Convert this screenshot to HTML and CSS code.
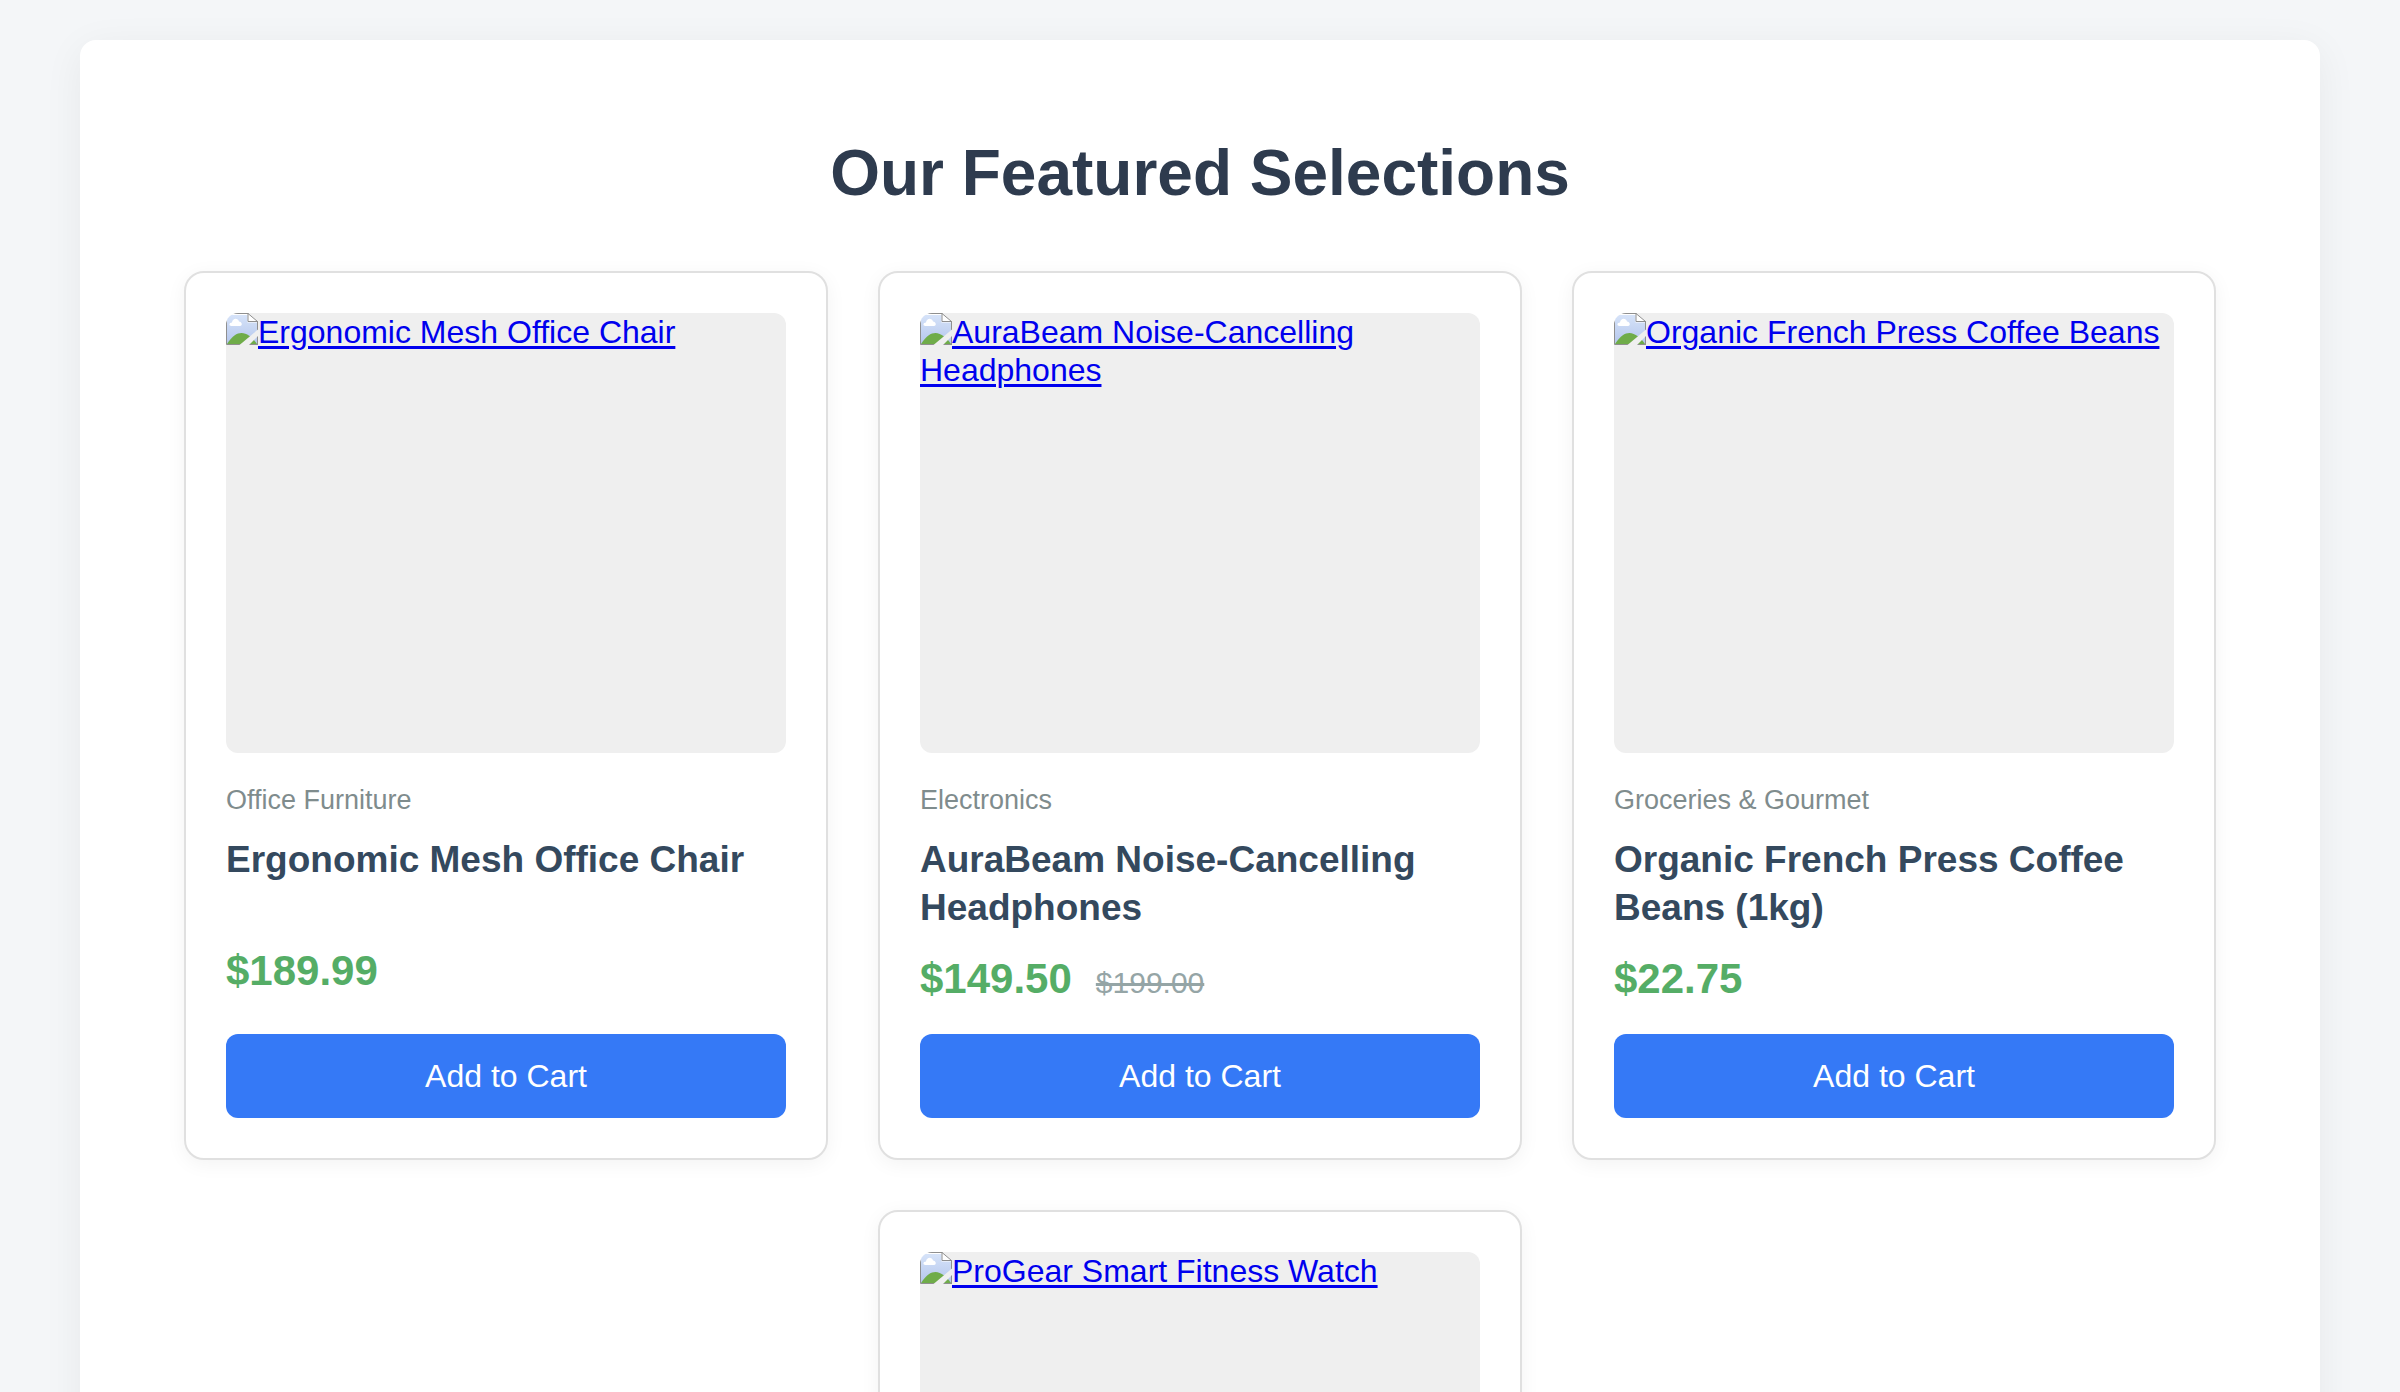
FILE: index.html
```html
<!DOCTYPE html>
<html lang="en">
<head>
<meta charset="utf-8">
<meta name="viewport" content="width=device-width, initial-scale=1">
<title>Our Featured Selections</title>
<link rel="stylesheet" href="styles.css">
</head>
<body>
<svg class="sprite" aria-hidden="true">
  <defs>
    <linearGradient id="sky" x1="0" y1="0" x2="0" y2="1">
      <stop offset="0" stop-color="#d6e3f9"/>
      <stop offset="1" stop-color="#b4c6ec"/>
    </linearGradient>
    <symbol id="picture" viewBox="0 0 32 32">
      <path d="M0.5 0.5H22.5L31.5 9V31.5H0.5Z" fill="#fff"/>
      <path d="M1 2H21.500V9.500H31V31H1Z" fill="url(#sky)"/>
      <path d="M5.500 13C2.500 13 3 9.500 6 9.500C6.500 5 12 4.500 13 8.500C16 8.500 17 13 14 13Z" fill="#fff"/>
      <path d="M1 31C6 23 11 20 15.500 20C21 20 27 25 31 31Z" fill="#6fac49"/>
      <path d="M0.500 0V31.500H32M0 0.500H22.500M31.500 8V32" fill="none" stroke="#8f8f8f"/>
      <path d="M22 0.500V8.500H31.500Z" fill="#fff" stroke="#8f8f8f"/>
      <path d="M13.500 32L32 16.500V23L23 32Z" fill="#efefef"/>
    </symbol>
  </defs>
</svg>
<main class="shop">
  <h1 class="shop-title">Our Featured Selections</h1>
  <div class="products">
    <article class="card">
      <a class="photo" href="#chair"><svg class="photo-icon" aria-hidden="true"><use href="#picture"/></svg>Ergonomic Mesh Office Chair</a>
      <p class="category">Office Furniture</p>
      <h2 class="name">Ergonomic Mesh Office Chair</h2>
      <p class="prices"><span class="price">$189.99</span></p>
      <button class="add" type="button">Add to Cart</button>
    </article>
    <article class="card">
      <a class="photo" href="#headphones"><svg class="photo-icon" aria-hidden="true"><use href="#picture"/></svg>AuraBeam Noise-Cancelling Headphones</a>
      <p class="category">Electronics</p>
      <h2 class="name">AuraBeam Noise-Cancelling Headphones</h2>
      <p class="prices"><span class="price">$149.50</span><s class="old-price">$199.00</s></p>
      <button class="add" type="button">Add to Cart</button>
    </article>
    <article class="card">
      <a class="photo" href="#coffee"><svg class="photo-icon" aria-hidden="true"><use href="#picture"/></svg>Organic French Press Coffee Beans</a>
      <p class="category">Groceries &amp; Gourmet</p>
      <h2 class="name">Organic French Press Coffee Beans (1kg)</h2>
      <p class="prices"><span class="price">$22.75</span></p>
      <button class="add" type="button">Add to Cart</button>
    </article>
    <article class="card">
      <a class="photo" href="#watch"><svg class="photo-icon" aria-hidden="true"><use href="#picture"/></svg>ProGear Smart Fitness Watch</a>
    </article>
  </div>
</main>
</body>
</html>
```
FILE: styles.css
```css
* {
  box-sizing: border-box;
}

body {
  margin: 0;
  padding: 40px 80px;
  background: #f4f6f8;
  font-family: "Liberation Sans", Arial, sans-serif;
  font-size: 32px;
}

.sprite {
  position: absolute;
  width: 0;
  height: 0;
}

.shop {
  padding: 95px 80px;
  background: #fff;
  border-radius: 16px;
  box-shadow: 0 8px 40px rgba(0, 0, 0, 0.06);
}

.shop-title {
  margin: 0 0 60px;
  color: #2e3b4e;
  font-size: 64px;
  line-height: 76px;
  text-align: center;
}

.products {
  display: flex;
  flex-wrap: wrap;
  justify-content: center;
  gap: 50px;
}

.card {
  display: flex;
  flex-direction: column;
  flex: 0 0 644px;
  max-width: 100%;
  padding: 40px;
  background: #fff;
  border: 2px solid #e0e0e0;
  border-radius: 20px;
  box-shadow: 0 4px 20px rgba(0, 0, 0, 0.05);
}

.photo {
  display: block;
  height: 440px;
  overflow: hidden;
  background: #efefef;
  border-radius: 12px;
  color: #0000ee;
  line-height: 38px;
  text-decoration-thickness: 3px;
  text-underline-offset: 3px;
}

.photo-icon {
  width: 32px;
  height: 32px;
  vertical-align: top;
}

.category {
  margin: 32px 0 20px;
  color: #7f8c8d;
  font-size: 27px;
  line-height: 31px;
}

.name {
  min-height: 88px;
  margin: 0;
  color: #34495e;
  font-size: 37px;
  line-height: 48px;
}

.prices {
  display: flex;
  align-items: baseline;
  gap: 24px;
  margin: 20px 0 24px;
  line-height: 54px;
}

.price {
  color: #55ad66;
  font-size: 42px;
  font-weight: bold;
}

.old-price {
  color: #95a5a6;
  font-size: 30px;
  text-decoration-thickness: 3px;
}

.add {
  height: 84px;
  margin-top: auto;
  border: 0;
  border-radius: 12px;
  background: #3579f6;
  color: #fff;
  font: inherit;
  cursor: pointer;
}
```
